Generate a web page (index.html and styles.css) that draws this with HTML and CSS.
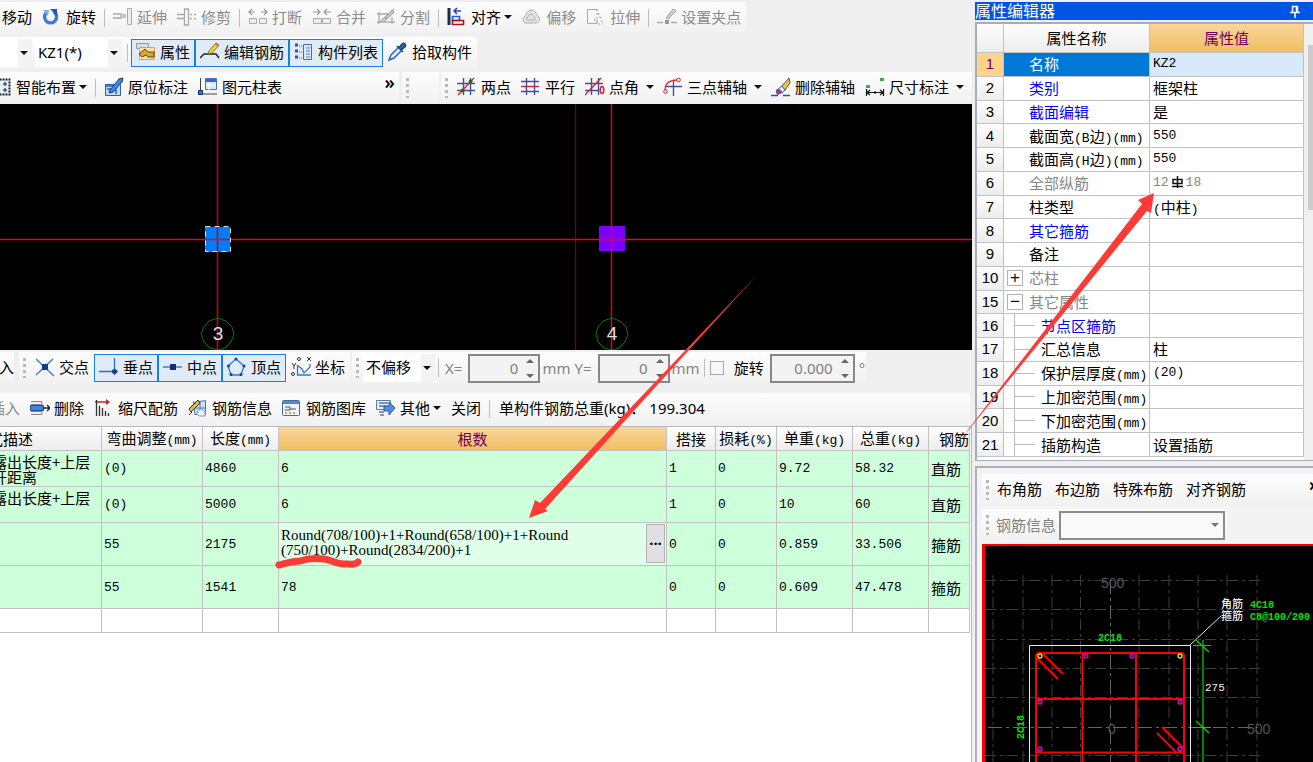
FILE: index.html
```html
<!DOCTYPE html>
<html lang="zh-CN">
<head>
<meta charset="utf-8">
<title>属性编辑器</title>
<link rel="stylesheet" href="styles.css">
</head>
<body>
<main class="main">
  <div class="bar">
    <div class="tools">
      <button class="item first">移动</button>
      <button class="item"><svg class="ico" viewBox="0 0 20 20"><path d="M4 6A6 6 0 1 0 12 5" fill="none" stroke="#3f7ad6" stroke-width="3.4"/><path d="M8 2h7v7z" fill="#2456b8"/><path d="M1 3l6 0-1 6z" fill="#7fb0ee"/></svg>旋转</button>
      <i class="sep"></i>
      <button class="item" disabled><svg class="ico" viewBox="0 0 20 20"><path d="M0 7h8v4H0M10 7v4M12 7v4" fill="none" stroke="#a8a8a8" stroke-width="1.3"/><path d="M14.500 1.500h4v16h-4z" fill="#eee" stroke="#aaa"/></svg>延伸</button>
      <button class="item" disabled><svg class="ico" viewBox="0 0 20 20"><path d="M0 7.500h7M0 11.500h7M13 7.500h2m2 0h2M13 11.500h2m2 0h2M7.500 2v16h4V2z" fill="none" stroke="#a8a8a8" stroke-width="1.300"/></svg>修剪</button>
      <i class="sep"></i>
      <button class="item" disabled><svg class="ico" viewBox="0 0 20 20"><path d="M1 5h6M4 2L1 5l3 3M19 5h-6M16 2l3 3-3 3" fill="none" stroke="#999" stroke-width="1.200"/><path d="M1.500 11.500h7v5h-7zM11.500 11.500h7v5h-7z" fill="#eee" stroke="#aaa"/></svg>打断</button>
      <button class="item" disabled><svg class="ico" viewBox="0 0 20 20"><path d="M1 5h6M5 2l3 3-3 3M19 5h-6M15 2l-3 3 3 3" fill="none" stroke="#999" stroke-width="1.200"/><path d="M1.500 11.500h8v5h-8zM10.500 11.500h8v5h-8z" fill="#eee" stroke="#aaa"/></svg>合并</button>
      <button class="item" disabled><svg class="ico" viewBox="0 0 20 20"><path d="M1 7h14M1 15h18M3 5v12M16 10v7M4 15L18 2M7 15L18 5" fill="none" stroke="#aaa" stroke-width="1.300"/><path d="M9 11l7-8 2 2-7 7z" fill="#ccc" stroke="#999"/></svg>分割</button>
      <i class="sep"></i>
      <button class="item"><svg class="ico" viewBox="0 0 20 20"><path d="M2 1v17" stroke="#1c2c50" stroke-width="3"/><path d="M5.500 9.500h7v4h-7z" fill="none" stroke="#2858e8" stroke-width="1.700"/><path d="M5.500 13.500h11v4h-11z" fill="none" stroke="#a41420" stroke-width="1.600"/><path d="M14 4H7m3-3L7 4l3 3" fill="none" stroke="#333fba" stroke-width="1.500"/></svg>对齐<i class="tri"></i></button>
      <button class="item" disabled><svg class="ico" viewBox="0 0 20 20"><path d="M9 3c4 0 5 4 7 6 3 3 1 7-2 7H4c-3 0-4-4-1-7 2-2 3-6 6-6z" fill="#e4e4e4" stroke="#aaa"/><path d="M9 7c2 0 3 3 4 4s0 2-1 2H6c-2 0-2-1-1-2 2-2 2-4 4-4z" fill="none" stroke="#aaa"/></svg>偏移</button>
      <button class="item" disabled><svg class="ico" viewBox="0 0 20 20"><path d="M11 2.500H1.500v14H11" fill="none" stroke="#aaa"/><path d="M11 2v15h6M12 6l5 10" fill="none" stroke="#999" stroke-dasharray="2 2"/><path d="M8 12l4 3" stroke="#aaa"/></svg>拉伸</button>
      <i class="sep"></i>
      <button class="item" disabled><svg class="ico" viewBox="0 0 20 20"><path d="M0 15.500h6M14 15.500h6" stroke="#aaa" stroke-width="1.500"/><path d="M8 13h4v4H8z" fill="#999"/><path d="M9 11l7-9 3 2-8 8z" fill="#ccc" stroke="#aaa"/></svg>设置夹点</button>
    </div>
  </div>
  <div class="bar">
    <div class="tools">
      <span class="combo narrow"><select aria-label="楼层"><option> </option></select></span>
      <span class="combo wide"><select aria-label="构件"><option>KZ1(*)</option></select></span>
      <i class="sep"></i>
      <button class="item on" aria-pressed="true"><svg class="ico" viewBox="0 0 20 20"><path d="M.500 1.500h12v5H.500z" fill="#ddd" stroke="#999"/><path d="M3.500 5.500h15v12h-15z" fill="#ffe1b3" stroke="#e89b45"/><path d="M3 12l6-5 3 3h6v5h-6l-2-2-4 2z" fill="#d9a634" stroke="#5d4413"/></svg>属性</button>
      <button class="item on" aria-pressed="true"><svg class="ico" viewBox="0 0 20 20"><path d="M0 16l4-4h12l3 4" fill="none" stroke="#222" stroke-width="1.500"/><path d="M9 9l7-8 3 2-7 8-4 1z" fill="#f4d442" stroke="#876f1c"/><path d="M15 2l1-1 3 2-1 2z" fill="#df6b5a"/></svg>编辑钢筋</button>
      <button class="item on" aria-pressed="true"><svg class="ico" viewBox="0 0 20 20"><path d="M9.500 2.500h8v15h-8z" fill="#dce9fb" stroke="#436ba8"/><path d="M12 6h4M12 9h4M12 12h4M12 15h4" stroke="#4f81c4"/><path d="M1 3h3M1 9h3M1 15h3" stroke="#34598e" stroke-width="3"/><path d="M5 4h3M5 10h3M5 16h3" stroke="#555" stroke-dasharray="1 1"/></svg>构件列表</button>
      <button class="item"><svg class="ico" viewBox="0 0 20 20"><path d="M1 18l2-5 8-8 3 3-8 8z" fill="#e8f2fc" stroke="#2b63c0" stroke-width="1.500"/><path d="M9 4l6 6M11 6l3-4c2-2 5 1 3 3l-4 3z" fill="#1f6fa5" stroke="#164575" stroke-width="1.500"/></svg>拾取构件</button>
    </div>
  </div>
  <div class="bar">
    <div class="tools grow">
      <span class="clip"><button class="item"><svg class="ico" viewBox="0 0 20 20"><path d="M1.500 2.500h16v15h-16z" fill="#e4eefb" stroke="#222" stroke-width="2" stroke-dasharray="2 1"/><path d="M4 7h4M6 5v4M11 7h4M13 5v4M4 13h4M6 11v4M11 13h4M13 11v4" stroke="#123"/></svg>智能布置<i class="tri"></i></button></span>
      <i class="sep"></i>
      <button class="item"><svg class="ico" viewBox="0 0 20 20"><path d="M1.500 7.500h15v11h-15z" fill="#bfdaf8" stroke="#2960ae"/><path d="M3 12h4v4M12 17v-5M2 9h8" stroke="#2960ae" stroke-width="1.500" fill="none"/><path d="M6 13l9-11 4-1-1 4-9 10-4 1z" fill="#3e86e0" stroke="#143e82"/></svg>原位标注</button>
      <button class="item"><svg class="ico" viewBox="0 0 20 20"><path d="M2.500 1v14M5 17h14" stroke="#444"/><path d="M.500 13.500h4v4h-4z" fill="#3572d8" stroke="#122b6e"/><path d="M7.500 1.500h11v11h-11z" fill="#d8e6fc" stroke="#4e72bb"/><path d="M7 2h12v3H7z" fill="#3e68c6"/><path d="M8 8h10M11 5v8" stroke="#fff"/></svg>图元柱表</button>
      <span class="more">»</span>
    </div>
    <div class="tools stub"><i class="grip"></i></div>
    <div class="tools axes">
      <i class="grip"></i>
      <button class="item"><svg class="ico" viewBox="0 0 20 20"><path d="M0 6.500h18M0 13.500h18M6.500 1v17M13.500 1v17" stroke="#424fa0" stroke-width="1.400"/><path d="M1 18L17 1" stroke="#e02020" stroke-width="1.300"/><circle cx="13.500" cy="4.500" r="2" fill="#276b1f"/><circle cx="5.500" cy="13.500" r="2" fill="#276b1f"/></svg>两点</button>
      <button class="item"><svg class="ico" viewBox="0 0 20 20"><path d="M0 4.500h18M0 14.500h18M5.500 1v17M13.500 1v17" stroke="#424fa0" stroke-width="1.400"/><path d="M0 9.500h18" stroke="#d02530" stroke-width="1.400"/></svg>平行</button>
      <button class="item split"><svg class="ico" viewBox="0 0 20 20"><path d="M0 6.500h18M0 13.500h13M6.500 1v17M13.500 1v17" stroke="#424fa0" stroke-width="1.400"/><path d="M0 18L16 1" stroke="#e02020" stroke-width="1.300"/><ellipse cx="17" cy="13" rx="1.800" ry="3.500" fill="none" stroke="#e02020" stroke-width="1.500"/></svg>点角<i class="tri"></i></button>
      <button class="item split"><svg class="ico" viewBox="0 0 20 20"><path d="M3 9.500h16M10.500 3v16" stroke="#424fa0" stroke-width="1.400"/><path d="M2 13C2 6 7 3 14 3" fill="none" stroke="#e03030" stroke-width="1.300"/><circle cx="15.500" cy="3" r="1.800" fill="none" stroke="#d02020"/><circle cx="2.500" cy="14.500" r="1.800" fill="none" stroke="#d02020"/></svg>三点辅轴<i class="tri"></i></button>
      <button class="item"><svg class="ico" viewBox="0 0 20 20"><path d="M0 18.500h7M12 18.500h7" stroke="#28539c" stroke-width="1.500"/><path d="M10 10l8-9 1 5-5 7z" fill="#e8c64e" stroke="#555"/><path d="M7 12l4-3 3 4-3 3z" fill="#dceaff" stroke="#46609a"/><path d="M6 12c3 0 5 1 5 4l-4 2c-2-1-3-4-1-6z" fill="#923b93"/></svg>删除辅轴</button>
      <button class="item split"><svg class="ico" viewBox="0 0 20 20"><path d="M1.500 12v7M18.500 12v7M2 15.500h16M5 13l-3 2.500L5 18M15 13l3 2.500-3 2.500M10 14v3" fill="none" stroke="#111" stroke-width="1.200"/><path d="M1 8h4v3H1zM15 1h4v3h-4z" fill="#3fad46"/></svg>尺寸标注<i class="tri"></i></button>
    </div>
  </div>

  <div class="canvas">
    <svg width="972" height="246" viewBox="0 104 972 246">
      <rect x="205" y="227" width="25" height="25" fill="#007dfb"/>
      <rect x="599" y="226" width="26" height="25" fill="#7b00ff"/>
      <path d="M217.500 104v246" stroke="#b80b16" stroke-width="1.600"/>
      <path d="M575.500 104v246" stroke="#780008" stroke-width="1.300"/>
      <path d="M611.500 104v246" stroke="#f00010" stroke-width="1.400"/>
      <path d="M0 239.500h4000" stroke="#f00010" stroke-width="1.400"/>
      <rect x="205.500" y="226.500" width="25" height="25" fill="none" stroke="#dbe6ef" stroke-dasharray="5 4"/>
      <g fill="none" stroke="#087708"><path d="M218 318l8 3 6 6 2 7-3 8-6 6-7 2-8-2-6-6-3-8 3-7 5-6z"/><path d="M612 318l8 3 6 6 2 7-3 8-6 6-7 2-8-2-6-6-2-8 2-7 5-6z"/></g>
      <g class="axis"><text x="218" y="340">3</text><text x="612" y="340">4</text></g>
    </svg>
  </div>

  <div class="bar snap">
    <div class="tools">
      <span class="clip tiny"><button class="item end">输入</button></span>
    </div>
    <div class="tools near">
      <i class="grip"></i>
      <button class="item"><svg class="ico" viewBox="0 0 20 20"><path d="M1 2l18 17M18 2L1 18" stroke="#3d82cd" stroke-width="1.500"/><path d="M7 7h6v6H7z" fill="#123b92"/></svg>交点</button>
      <button class="item on" aria-pressed="true"><svg class="ico" viewBox="0 0 20 20"><path d="M0 14.500h19M15.500 1v17" stroke="#2f70bd" stroke-width="1.300"/><circle cx="15.500" cy="14.500" r="2.500" fill="#173a88"/></svg>垂点</button>
      <button class="item on" aria-pressed="true"><svg class="ico" viewBox="0 0 20 20"><path d="M0 10h19" stroke="#2f70bd" stroke-width="1.300"/><path d="M7 7h6v6H7z" fill="#122d7e"/></svg>中点</button>
      <button class="item on" aria-pressed="true"><svg class="ico" viewBox="0 0 20 20"><path d="M9 2l8 7-3 9H4L1 9z" fill="none" stroke="#3c79c7" stroke-width="1.300"/><g fill="#18419b"><circle cx="9" cy="2" r="1.500"/><circle cx="17" cy="9" r="1.500"/><circle cx="14" cy="17.500" r="1.500"/><circle cx="4" cy="17.500" r="1.500"/><circle cx="1.500" cy="9" r="1.500"/></g></svg>顶点</button>
      <button class="item"><svg class="ico" viewBox="0 0 20 20"><path d="M6.500 8v10H20M6 8l5 4 2 4 6-6v-3" fill="none" stroke="#3678c7" stroke-width="1.300"/><path d="M1 6l2 3 2-3M3 9v3M16 0l4 4M20 0l-4 4" fill="none" stroke="#334"/><circle cx="8" cy="2" r="1.500" fill="none" stroke="#334"/><circle cx="2" cy="17" r="1.500" fill="none" stroke="#334"/></svg>坐标</button>
    </div>
    <div class="tools near">
      <i class="grip"></i>
      <span class="combo mid"><select aria-label="偏移方式"><option>不偏移</option></select></span>
      <i class="sep"></i>
      <label class="unit" for="dx">X=</label>
      <span class="spin"><input id="dx" value="0" disabled></span>
      <span class="unit">mm</span>
      <label class="unit" for="dy">Y=</label>
      <span class="spin"><input id="dy" value="0" disabled></span>
      <span class="unit">mm</span>
      <i class="sep"></i>
      <input class="tick" type="checkbox" id="rot"><label class="turn" for="rot">旋转</label>
      <span class="spin big"><input value="0.000" aria-label="旋转角度" disabled></span>
      <span class="unit deg">°</span>
    </div>
  </div>

  <div class="bar rebar">
    <div class="tools grow">
      <span class="clip ins"><button class="item" disabled>插入</button></span>
      <button class="item"><svg class="ico" viewBox="0 0 20 20"><path d="M1 3.500h11v3H1M1 13.500h11v3H1" fill="#eee" stroke="#888"/><path d="M.500 7.500h13v5H.500z" fill="#3d86e0" stroke="#1d4f9f"/><path d="M13 10h7m-3-3l3 3-3 3" fill="none" stroke="#222" stroke-width="1.300"/></svg>删除</button>
      <button class="item"><svg class="ico" viewBox="0 0 20 20"><path d="M1 4h14" stroke="#c22" stroke-width="1.500"/><path d="M12 1l4 3-4 3" fill="#c22"/><path d="M2.500 2v16M5.500 8v10M8.500 10v8M11.500 13v5M14.500 15v3" stroke="#333" stroke-width="1.300"/></svg>缩尺配筋</button>
      <button class="item"><svg class="ico" viewBox="0 0 20 20"><path d="M5.500 4.500l12-2v14H7z" fill="#cfe1f8" stroke="#4977bd"/><path d="M12 3v13M7 10h10" stroke="#4977bd"/><path d="M1 17l3-3" stroke="#333"/><path d="M1 11l9-9 2 3-9 9z" fill="#dfb555" stroke="#42330f"/><path d="M9 16c0-6 6-6 8-2v4h-6z" fill="#eef5ff" stroke="#7699ca"/></svg>钢筋信息</button>
      <button class="item"><svg class="ico" viewBox="0 0 20 20"><rect x=".500" y="2.500" width="17" height="15" rx="1" fill="#eef4fb" stroke="#436b9d"/><path d="M1 3h16v3H1z" fill="#4d8bd2"/><path d="M3 9h5v3H3M8 11h6" fill="none" stroke="#555"/><path d="M3 15h12" stroke="#d0a65b" stroke-width="2" stroke-dasharray="2 2"/></svg>钢筋图库</button>
      <button class="item"><svg class="ico" viewBox="0 0 20 20"><path d="M.500 2.500h14v9h-14z" fill="#e8f0fa" stroke="#5b77a4"/><path d="M3 5h9M3 8h7M3 14h5M4 17h4" stroke="#5b77a4" stroke-width="1.300"/><path d="M8 8h5V4l6 6-6 7v-4H8z" fill="#4d8de3" stroke="#2958a7"/></svg>其他<i class="tri"></i></button>
      <button class="item">关闭</button>
      <i class="sep"></i>
      <span class="total">单构件钢筋总重(kg)：<b>199.304</b></span>
    </div>
  </div>

  <div class="grid">
    <table class="bars">
      <colgroup><col class="c0"><col class="c1"><col class="c2"><col><col class="c4"><col class="c5"><col class="c6"><col class="c6"><col class="c8"></colgroup>
      <thead><tr><th class="flush">式描述</th><th>弯曲调整<span class="n">(mm)</span></th><th>长度<span class="n">(mm)</span></th><th class="hot">根数</th><th>搭接</th><th>损耗<span class="n">(%)</span></th><th>单重<span class="n">(kg)</span></th><th>总重<span class="n">(kg)</span></th><th class="type">钢筋</th></tr></thead>
      <tbody>
        <tr class="r1"><td class="desc">露出长度+上层<br>开距离</td><td class="n">(0)</td><td class="n">4860</td><td class="n">6</td><td class="n">1</td><td class="n">0</td><td class="n">9.72</td><td class="n">58.32</td><td>直筋</td></tr>
        <tr class="r1"><td class="desc">露出长度+上层</td><td class="n">(0)</td><td class="n">5000</td><td class="n">6</td><td class="n">1</td><td class="n">0</td><td class="n">10</td><td class="n">60</td><td>直筋</td></tr>
        <tr class="r2"><td></td><td class="n">55</td><td class="n">2175</td><td class="edit"><div class="formula"><span>Round(708/100)+1+Round(658/100)+1+Round<br>(750/100)+Round(2834/200)+1</span><button class="dots" aria-label="编辑公式">···</button></div></td><td class="n">0</td><td class="n">0</td><td class="n">0.859</td><td class="n">33.506</td><td>箍筋</td></tr>
        <tr class="r2"><td></td><td class="n">55</td><td class="n">1541</td><td class="n">78</td><td class="n">0</td><td class="n">0</td><td class="n">0.609</td><td class="n">47.478</td><td>箍筋</td></tr>
        <tr class="blank"><td></td><td></td><td></td><td></td><td></td><td></td><td></td><td></td><td></td></tr>
      </tbody>
    </table>
  </div>
</main>

<aside class="side">
  <header class="title"><span>属性编辑器</span><svg width="12" height="14" viewBox="0 0 12 14"><path d="M3.500 2.500h5v6h-5zM1 8.500h10M6 9v5M7.500 3v5" fill="none" stroke="#fff" stroke-width="1.500"/></svg></header>
  <div class="props">
    <table class="attr">
      <colgroup><col class="p0"><col class="p1"><col></colgroup>
      <thead><tr><th></th><th>属性名称</th><th class="hot">属性值</th></tr></thead>
      <tbody>
        <tr class="sel"><th>1</th><td>名称</td><td class="n">KZ2</td></tr>
        <tr><th>2</th><td class="blue">类别</td><td>框架柱</td></tr>
        <tr><th>3</th><td class="blue">截面编辑</td><td>是</td></tr>
        <tr><th>4</th><td>截面宽<span class="n">(B</span>边<span class="n">)(mm)</span></td><td class="n">550</td></tr>
        <tr><th>5</th><td>截面高<span class="n">(H</span>边<span class="n">)(mm)</span></td><td class="n">550</td></tr>
        <tr><th>6</th><td class="gray">全部纵筋</td><td class="n gray">12<svg class="phi" viewBox="0 0 15 12"><path d="M3 3.500h9v4H3zM7.500 0v12M2 10.500h11" fill="none" stroke="#111" stroke-width="1.500"/></svg>18</td></tr>
        <tr><th>7</th><td>柱类型</td><td><span class="n">(</span>中柱<span class="n">)</span></td></tr>
        <tr><th>8</th><td class="blue">其它箍筋</td><td></td></tr>
        <tr><th>9</th><td>备注</td><td></td></tr>
        <tr><th>10</th><td class="gray node"><div><button class="fold" aria-label="展开">+</button>芯柱</div></td><td></td></tr>
        <tr><th>15</th><td class="gray node"><div><button class="fold" aria-label="收起">−</button>其它属性</div></td><td></td></tr>
        <tr><th>16</th><td class="leaf blue">节点区箍筋</td><td></td></tr>
        <tr><th>17</th><td class="leaf">汇总信息</td><td>柱</td></tr>
        <tr><th>18</th><td class="leaf">保护层厚度<span class="n">(mm)</span></td><td class="n">(20)</td></tr>
        <tr><th>19</th><td class="leaf">上加密范围<span class="n">(mm)</span></td><td></td></tr>
        <tr><th>20</th><td class="leaf">下加密范围<span class="n">(mm)</span></td><td></td></tr>
        <tr><th>21</th><td class="leaf">插筋构造</td><td>设置插筋</td></tr>
      </tbody>
    </table>
    <div class="scroll"><i></i></div>
  </div>
  <section class="section">
    <div class="tools">
      <i class="grip"></i>
      <button class="word">布角筋</button><button class="word">布边筋</button><button class="word">特殊布筋</button><button class="word">对齐钢筋</button>
      <span class="more edge">»</span>
    </div>
    <div class="tools info">
      <i class="grip"></i>
      <label for="info">钢筋信息</label>
      <span class="combo boxed"><select id="info"><option> </option></select></span>
    </div>
    <div class="cad">
      <svg width="328" height="216" viewBox="985 546 328 216">
        <g stroke="#3c3c3c" fill="none" stroke-dasharray="11 4 3 4">
          <path d="M993 575v400M1023 575v400M1052 575v400M1080.500 575v400M1139 575v400M1169 575v400M1198 575v400M1227 575v400M1257 575v400"/>
          <path d="M985 580.500h276M985 609.500h276M985 639.500h276M985 668.500h276M985 697.500h276M985 755.500h276"/>
        </g>
        <path d="M1110.500 580v400M988 727.500h270" stroke="#646464" stroke-dasharray="14 4 3 4"/>
        <g class="scale"><text x="1101" y="588">500</text><text x="1108" y="734">0</text><text x="1247" y="734">500</text></g>
        <path d="M1029.500 800V645.500h161V800M1190 645l31-29" fill="none" stroke="#e8e8e8"/>
        <path d="M1036 800V656q0-3 3-3h142q3 0 3 3v144M1082.500 653v150M1136 653v150M1036 699h148M1036 752.500h148M1036 657l22 22M1043 654l20 20M1162 727l22 22M1157 733l19 19" fill="none" stroke="#fa0000" stroke-width="2"/>
        <g fill="none" stroke="#f0e800" stroke-width="1.300"><circle cx="1040" cy="656" r="2"/><circle cx="1180" cy="656" r="2"/></g>
        <g fill="none" stroke="#e000e0" stroke-width="1.300"><circle cx="1086" cy="656" r="2"/><circle cx="1132" cy="656" r="2"/><circle cx="1040" cy="702" r="2"/><circle cx="1180" cy="702" r="2"/><circle cx="1040" cy="749" r="2"/><circle cx="1180" cy="749" r="2"/></g>
        <path d="M1203 640v160M1193 645.500h18M1193 727.500h18M1196 640l13 12M1196 721l13 12" fill="none" stroke="#00d800" stroke-width="1.200"/>
        <g class="mark"><text x="1098" y="641">2C18</text><text x="1250" y="608">4C18</text><text x="1250" y="620">C8@100/200</text><text transform="translate(1024 739) rotate(-90)">2C18</text></g>
        <g class="note"><text x="1221" y="608">角筋</text><text x="1221" y="620">箍筋</text><text x="1205" y="691">275</text></g>
      </svg>
    </div>
  </section>
</aside>

<svg class="ink" width="1313" height="762" viewBox="0 0 1313 762" aria-hidden="true">
  <g fill="#fb3b38"><path d="M529 518l6-18 5 3L757 275 545 509l3 2z"/><path d="M1154 193l-3 20-4-2L957 444l185-240-4-4z"/></g>
  <path d="M279 565c8-2 14-4 21-4 8-3 16-3 24-2 8 1 12 5 20 5 6 0 12 1 14-2" fill="none" stroke="#fb3b38" stroke-width="7" stroke-linecap="round"/>
</svg>
</body>
</html>
```

FILE: styles.css
```css
* { box-sizing: border-box; }
body {
  margin: 0;
  min-height: 100vh;
  display: flex;
  position: relative;
  overflow: hidden;
  background: #efefef;
  color: #000;
  font: 15px/20px "Noto Sans", "Noto Sans CJK SC", sans-serif;
}
button, select, input { font: inherit; color: inherit; margin: 0; }
button { border: 0; background: none; }
i { font-style: normal; }

.main { flex: 1; min-width: 0; display: flex; flex-direction: column; }
.side { width: 341px; padding: 2px 0 0 3px; display: flex; flex-direction: column; }

/* toolbars */
.bar { display: flex; height: 35px; padding-top: 2px; }
.tools {
  display: flex;
  align-items: center;
  height: 32px;
  background: linear-gradient(#fdfdfd, #f1f1f1);
  white-space: nowrap;
}
.tools.grow { flex: 1; min-width: 0; }
.item {
  display: flex;
  align-items: center;
  flex: none;
  height: 28px;
  padding: 0 5px 2px;
}
.item.first { padding-left: 2px; }
.item:disabled { color: #8c8c8c; }
.item.on { background: #dfebf6; box-shadow: inset 0 0 0 1px #1681da; }
.ico { width: 20px; height: 20px; margin-right: 4px; flex: none; }
.sep { width: 1px; height: 18px; margin: 0 3px; background: #bdbdbd; flex: none; }
.tri {
  border: 4px solid transparent;
  border-top-color: #111;
  border-bottom: 0;
  margin-left: 3px;
}
.split { padding-right: 4px; }
.split .tri { margin-left: 7px; }
.axes { padding-right: 4px; }
.grip {
  width: 3px;
  height: 20px;
  margin: 0 4px;
  background: repeating-linear-gradient(#b9b9b9 0 3px, transparent 3px 6px);
  flex: none;
}
.clip { display: flex; justify-content: flex-end; overflow: hidden; width: 92px; flex: none; }
.clip.tiny { width: 14px; }
.clip.ins { width: 25px; }
.item.end { padding-right: 0; }
.more { margin-left: auto; padding: 0 4px 12px; font-size: 18px; font-weight: 600; }
.stub { width: 37px; margin: 0 2px 0 3px; }

.combo { position: relative; height: 28px; background: #fff; flex: none; }
.combo select {
  appearance: none;
  width: 100%;
  height: 100%;
  padding: 0 20px 2px 3px;
  border: 0;
  border-radius: 0;
  background: linear-gradient(#f3f3f3, #f3f3f3) right / 14px 100% no-repeat #fff;
}
.combo::after {
  content: "";
  position: absolute;
  right: 4px;
  top: 12px;
  border: 4px solid transparent;
  border-top-color: #111;
  border-bottom: 0;
}
.narrow { width: 32px; }
.wide { width: 87px; margin: 0 2px 0 3px; }
.mid { width: 72px; }

/* drawing area */
.canvas { height: 246px; background: #000; overflow: hidden; margin-top: -1px; }
.canvas svg { display: block; overflow: visible; }
.axis text { font: 19px "Liberation Sans", sans-serif; fill: #e0e0e0; text-anchor: middle; }

/* snap and rebar bars */
.snap { height: 43px; padding-top: 2px; }
.near { margin-left: 5px; }
.near + .near { margin-left: 2px; }
.unit { color: #838383; padding: 0 1px; }
label.unit { padding-left: 3px; }
.spin { position: relative; width: 72px; height: 29px; margin: 0 1px 0 5px; flex: none; }
.spin.big { width: 85px; margin-left: 6px; }
.spin input {
  width: 100%;
  height: 100%;
  padding: 0 20px 0 4px;
  border: 2px solid #878787;
  background: #f3f3f3;
  color: #808080;
  text-align: right;
}
.spin::before, .spin::after {
  content: "";
  position: absolute;
  right: 6px;
  border: 4px solid transparent;
}
.spin::before { top: 5px; border-bottom-color: #666; border-top: 0; }
.spin::after { bottom: 5px; border-top-color: #666; border-bottom: 0; }
.tick { appearance: none; width: 14px; height: 14px; margin: 0 0 0 2px; border: 1px solid #a8a8a8; background: #f8f8f8; }
.turn { padding-left: 10px; }
.deg { padding-left: 3px; }
.rebar { height: 33px; padding: 0 2px 0 0; }
.total { padding: 0 0 2px 6px; }
.total b { font-weight: 400; margin-left: 4px; }

/* rebar table */
.grid { flex: 1; background: #fff; overflow: hidden; border-top: 1px solid #b8b8bc; border-right: 1px solid #b8b8bc; padding-right: 1px; }
table { border-collapse: separate; border-spacing: 0; table-layout: fixed; font-family: "Noto Sans CJK SC", sans-serif; }
th { font-weight: 400; background: linear-gradient(#fdfdfd, #ededed); }
th, td { padding: 0; border: 0 solid #c2c2c2; border-width: 0 1px 1px 0; white-space: nowrap; overflow: hidden; }
th.hot { background: linear-gradient(#f9d59a, #f0bf63); color: #6d005f; }
.n { font-family: "Liberation Mono", "Noto Sans CJK SC", monospace; font-size: 13px; }
span.n { line-height: 1; }
.bars { width: calc(100% + 12px); margin-left: -12px; line-height: 15px; }
.bars thead th { height: 24px; }
.c0 { width: 114px; }
.c1 { width: 101px; }
.c2 { width: 76px; }
.c4 { width: 49px; }
.c5 { width: 61px; }
.c6 { width: 76px; }
.c8 { width: 41px; }
.bars .flush { text-align: left; }
.bars .type { text-align: right; }
.bars td { padding: 0 3px 0 2px; background: #cdffdb; }
.bars .desc { padding-left: 4px; vertical-align: top; padding-top: 3px; }
.r1 td { height: 36px; }
.r2 td { height: 43px; }
.bars .blank td { height: 24px; background: #fff; }
.bars .edit { background: #e0ffe8; padding: 0 1px 2px 2px; }
.formula { display: flex; justify-content: space-between; align-items: center; font-family: "Liberation Serif", serif; }
.dots { width: 19px; height: 39px; padding: 0; border: 1px solid #b4b4b4; background: #e0dfe1; font: 700 15px "Noto Sans", sans-serif; }

/* property editor */
.title {
  display: flex;
  align-items: center;
  justify-content: space-between;
  height: 18px;
  padding-right: 12px;
  background: #0054e6;
  color: #fff;
  font-size: 16px;
}
.props { display: flex; border: 1px solid #a8acb8; border-width: 2px 0 1px 2px; height: 439px; margin-top: 2px; background: #fff; overflow: hidden; }
.attr { flex: 1; height: 433px; line-height: 18px; }
.attr thead th { height: 29px; }
.p0 { width: 27px; }
.p1 { width: 146px; }
.attr tbody th { font: 15px/18px "Liberation Sans", sans-serif; }
.attr td { padding-left: 3px; }
.attr td:nth-child(2) { padding-left: 25px; }
.attr .sel th { background: #ffd48a; color: #6d005f; }
.attr .sel td { background: #d8eafa; }
.attr .sel td:nth-child(2) { background: #0078d7; color: #fff; }
.blue { color: #0000f5; }
.gray { color: #868686; }
.phi { width: 15px; height: 12px; vertical-align: -2px; margin: 0 1px; }
.attr .node:nth-child(2) { padding-left: 3px; }
.node div { display: flex; align-items: center; }
.fold { width: 16px; height: 16px; margin-right: 6px; padding: 0; border: 1px solid #b0b0b0; background: #fff; color: #111; font: 17px/12px "Liberation Sans", sans-serif; }
.attr .leaf:nth-child(2) {
  padding-left: 37px;
  background:
    linear-gradient(#bcbcbc, #bcbcbc) 11px 50% / 20px 1px no-repeat,
    linear-gradient(#bcbcbc, #bcbcbc) 10px 0 / 1px 100% no-repeat;
}
.scroll { width: 9px; padding: 21px 0 0 4px; background: #f0f0f0; }
.scroll i { display: block; height: 165px; background: #cdcdcd; }

/* column section */
.section { flex: 1; display: flex; flex-direction: column; margin-top: 5px; padding: 6px 0 0 5px; border: 1px solid #b0b0b6; border-width: 2px 0 0 2px; background: #f3f3f3; }
.section .grip { margin: 0 3px 0 4px; }
.word { padding: 0 8px 2px 5px; }
.edge { width: 4px; padding: 0 0 12px; }
.info { width: 245px; margin: 3px 0; color: #828282; }
.section .info .grip { margin-right: 7px; }
.boxed { width: 166px; height: 29px; margin-left: 3px; border: 2px solid #8c8c8c; }
.boxed select { background: #f9f9f9; }
.boxed::after { border-top-color: #777; top: 10px; }
.cad { flex: 1 1 0; background: #000; border: 3px solid #f00; border-width: 2px 0 0 3px; overflow: hidden; }
.cad svg { display: block; }
.scale text { font: 14px "Liberation Sans", sans-serif; fill: #555; }
.mark text { font: 700 10px "Liberation Mono", monospace; fill: #00e400; }
.note text { font: 500 11px "Liberation Mono", "Noto Sans CJK SC", monospace; fill: #f0f0f0; }

.ink { position: absolute; left: 0; top: 0; pointer-events: none; }
```
